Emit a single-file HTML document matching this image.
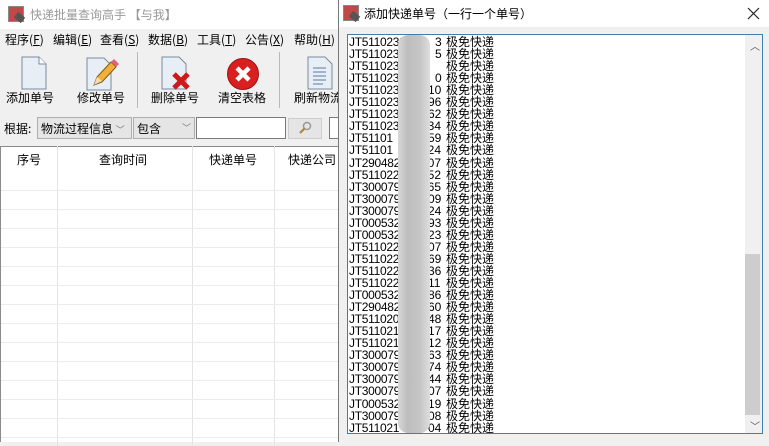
<!DOCTYPE html>
<html><head><meta charset="utf-8"><style>
*{margin:0;padding:0;box-sizing:border-box}
body{width:769px;height:442px;position:relative;overflow:hidden;background:#f0f0f0;font-family:"Liberation Sans","Noto Sans CJK SC",sans-serif;font-size:12px;color:#000}
.a{position:absolute}
.cn{font-family:"Noto Sans CJK SC","WenQuanYi Zen Hei",sans-serif}
.m{position:absolute;top:31px;font-size:12px;white-space:nowrap;font-family:"Noto Sans CJK SC","WenQuanYi Zen Hei",sans-serif}
.tb{position:absolute;top:89px;font-size:12px;white-space:nowrap}
.sep{position:absolute;top:52px;width:1px;height:56px;background:#b8b8b8}
.hd{position:absolute;top:151px;font-size:12px}
.vl{position:absolute;top:146px;width:1px;height:300px;background:#e4e4e4}
.hl{position:absolute;left:1px;width:337px;height:1px;background:#ececec}
.ln{position:absolute;left:349px;height:12px;line-height:12px;font-size:12px;white-space:nowrap}
.ln .p{position:absolute;left:0;letter-spacing:-0.3px}
.ln .s{position:absolute;left:79px}
.ln .n{position:absolute;left:97px;font-family:"WenQuanYi Zen Hei","Noto Sans CJK SC",sans-serif;font-size:12px}
</style></head><body>
<div class="a" style="left:0;top:0;width:340px;height:29px;background:#fff"></div>
<div class="a" style="left:8px;top:6px;width:16px;height:16px;background:#c04848;border:1px solid #888"></div>
<div class="a" style="left:15px;top:14px;width:9px;height:7px;background:#555;transform:rotate(40deg)"></div>
<div class="a cn" style="left:30px;top:6px;color:#999;font-size:12px">快递批量查询高手 【与我】</div>
<div class="m" style="left:5px">程序(<u>F</u>)</div>
<div class="m" style="left:53px">编辑(<u>E</u>)</div>
<div class="m" style="left:100px">查看(<u>S</u>)</div>
<div class="m" style="left:148px">数据(<u>B</u>)</div>
<div class="m" style="left:197px">工具(<u>T</u>)</div>
<div class="m" style="left:245px">公告(<u>X</u>)</div>
<div class="m" style="left:294px">帮助(<u>H</u>)</div>
<svg class="a" style="left:20px;top:56px" width="28" height="34"><path d="M2 1h17l7 7v25H2z" fill="#e8eef6" stroke="#7a8aa0"/><path d="M19 1v7h7" fill="#fff" stroke="#7a8aa0"/></svg>
<svg class="a" style="left:84px;top:55px" width="36" height="36"><path d="M3 3h17l7 7v25H3z" fill="#e8eef6" stroke="#7a8aa0"/><path d="M10 30l3-8 14-15 5 5-14 15z" fill="#f2b03a" stroke="#7a5a10"/><path d="M27 7l3-3 5 5-3 3z" fill="#e06080"/><path d="M10 30l3-8 5 4z" fill="#f5dcb0"/></svg>
<div class="sep" style="left:137px"></div>
<svg class="a" style="left:160px;top:56px" width="36" height="34"><path d="M2 1h17l7 7v25H2z" fill="#e8eef6" stroke="#7a8aa0"/><path d="M14 18l14 14M28 18l-14 14" stroke="#d01818" stroke-width="5"/></svg>
<svg class="a" style="left:226px;top:57px" width="34" height="34"><circle cx="17" cy="17" r="15.5" fill="#d82020" stroke="#a01010"/><path d="M11 11l12 12M23 11l-12 12" stroke="#fff" stroke-width="4.5"/></svg>
<div class="sep" style="left:279px"></div>
<svg class="a" style="left:306px;top:56px" width="28" height="34"><path d="M2 1h17l7 7v25H2z" fill="#e8eef6" stroke="#7a8aa0"/><path d="M7 12h13M7 16h13M7 20h13M7 24h13M7 28h10" stroke="#5a7aa0"/></svg>
<div class="tb cn" style="left:6px">添加单号</div>
<div class="tb cn" style="left:77px">修改单号</div>
<div class="tb cn" style="left:151px">删除单号</div>
<div class="tb cn" style="left:218px">清空表格</div>
<div class="tb cn" style="left:294px">刷新物流</div>
<div class="a cn" style="left:4px;top:120px">根据:</div>
<div class="a cn" style="left:37px;top:117px;width:95px;height:22px;background:#e5e5e5;border:1px solid #adadad;padding:2px 0 0 3px">物流过程信息 <span style="color:#777;font-size:9px">﹀</span></div>
<div class="a cn" style="left:133px;top:117px;width:62px;height:22px;background:#e5e5e5;border:1px solid #adadad;padding:2px 0 0 3px">包含<span class="a" style="left:48px;top:3px;color:#777;font-size:9px">﹀</span></div>
<div class="a" style="left:196px;top:117px;width:90px;height:22px;background:#fff;border:1px solid #7a7a7a"></div>
<div class="a" style="left:288px;top:118px;width:34px;height:21px;background:#e5e5e5;border:1px solid #ccc"></div>
<svg class="a" style="left:298px;top:121px" width="14" height="14"><circle cx="9" cy="5" r="3.5" fill="none" stroke="#999" stroke-width="1.5"/><path d="M6.5 7.5L2 12" stroke="#b08040" stroke-width="2"/></svg>
<div class="a" style="left:329px;top:117px;width:12px;height:22px;background:#fff;border:1px solid #7a7a7a"></div>
<div class="a" style="left:0;top:146px;width:340px;height:296px;background:#fff;border-top:1px solid #8a8a8a;border-left:1px solid #8a8a8a"></div>
<div class="hd cn" style="left:17px">序号</div>
<div class="hd cn" style="left:99px">查询时间</div>
<div class="hd cn" style="left:209px">快递单号</div>
<div class="hd cn" style="left:288px">快递公司</div>
<div class="vl" style="left:57px"></div><div class="vl" style="left:192px"></div><div class="vl" style="left:274px"></div>
<div class="hl" style="top:190px"></div><div class="hl" style="top:209px"></div><div class="hl" style="top:228px"></div><div class="hl" style="top:247px"></div><div class="hl" style="top:266px"></div><div class="hl" style="top:285px"></div><div class="hl" style="top:304px"></div><div class="hl" style="top:323px"></div><div class="hl" style="top:342px"></div><div class="hl" style="top:361px"></div><div class="hl" style="top:380px"></div><div class="hl" style="top:399px"></div><div class="hl" style="top:418px"></div><div class="hl" style="top:437px"></div>
<div class="a" style="left:338px;top:0;width:431px;height:442px;background:#f0f0f0;border-left:1px solid #777"></div>
<div class="a" style="left:339px;top:0;width:430px;height:27px;background:#fff"></div>
<div class="a" style="left:343px;top:5px;width:16px;height:16px;background:#c04848;border:1px solid #888"></div>
<div class="a" style="left:350px;top:13px;width:9px;height:7px;background:#555;transform:rotate(40deg)"></div>
<div class="a cn" style="left:364px;top:5px;font-size:12px">添加快递单号（一行一个单号）</div>
<svg class="a" style="left:747px;top:7px" width="13" height="13"><path d="M1 1l11 11M12 1L1 12" stroke="#222" stroke-width="1.2"/></svg>
<div class="a" style="left:347px;top:34px;width:416px;height:400px;background:#fff;border:1px solid #3c7fb1"></div>
<div class="a" style="left:745px;top:35px;width:17px;height:398px;background:#f0f0f0"></div>
<div class="a" style="left:745px;top:254px;width:15px;height:161px;background:#cdcdcd"></div>
<div class="a" style="left:750px;top:38px;font-size:10px;color:#555">︿</div>
<div class="a" style="left:750px;top:418px;font-size:10px;color:#555">﹀</div>
<div id="L"></div>
<div class="a" style="left:398px;top:35px;width:32px;height:398px;background:linear-gradient(90deg,#d8d8d8,#bdbdbd 30%,#c6c6c6 70%,#dedede);border-radius:10px"></div>
<script>
var d=[["JT5110238","3"],["JT5110238","5"],["JT5110238",""],["JT5110238","0"],["JT5110238","10"],["JT511023","96"],["JT511023","62"],["JT511023","934"],["JT51101","59"],["JT51101","224"],["JT290482","307"],["JT511022","452"],["JT300079","965"],["JT300079","09"],["JT300079","24"],["JT000532","93"],["JT000532","23"],["JT511022","07"],["JT511022","69"],["JT511022","36"],["JT511022","11"],["JT000532","86"],["JT290482","60"],["JT511020","48"],["JT511021","17"],["JT511021","12"],["JT300079","63"],["JT300079","74"],["JT300079","44"],["JT300079","07"],["JT000532","19"],["JT300079","08"],["JT511021","04"]];
var h="";for(var i=0;i<d.length;i++){var t=36+i*12.05;var w=d[i][1].length;h+='<div class="ln" style="top:'+t+'px"><span class="p">'+d[i][0]+'</span><span class="s" style="left:'+(93-w*7)+'px">'+d[i][1]+'</span><span class="n">极免快递</span></div>';}
document.getElementById("L").innerHTML=h;
</script>
</body></html>
